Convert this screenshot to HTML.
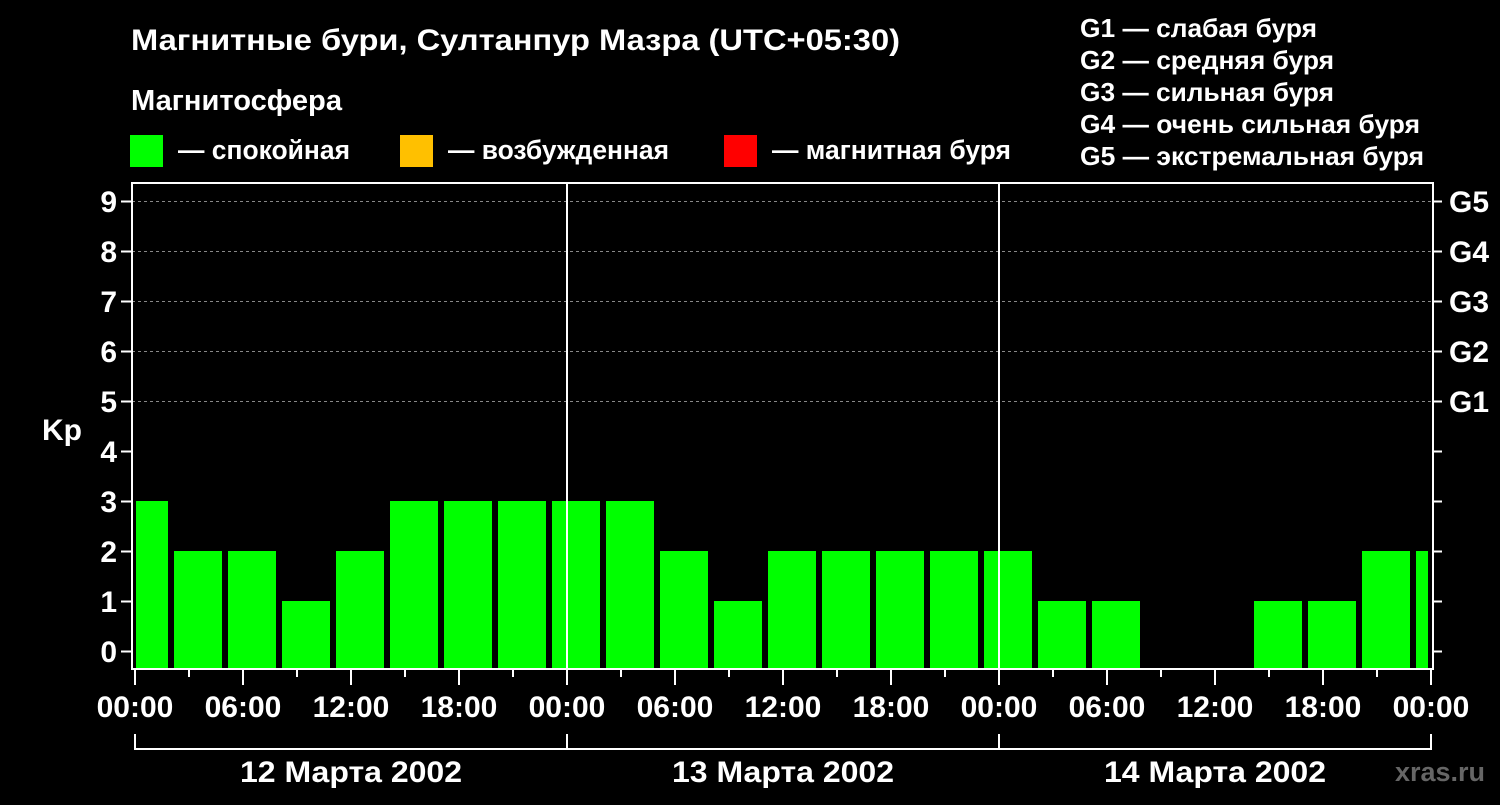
<!DOCTYPE html>
<html><head><meta charset="utf-8"><style>
body{margin:0;background:#000;width:1500px;height:800px;overflow:hidden}
svg text{font-family:"Liberation Sans",Arial,sans-serif;font-weight:bold;fill:#fff}
</style></head><body>
<svg width="1500" height="800" xmlns="http://www.w3.org/2000/svg">
<rect width="1500" height="800" fill="#000"/>
<text x="131" y="50" font-size="30" textLength="769" lengthAdjust="spacingAndGlyphs">Магнитные бури, Султанпур Мазра (UTC+05:30)</text>
<text x="131" y="110" font-size="29" textLength="211" lengthAdjust="spacingAndGlyphs">Магнитосфера</text>
<rect x="130" y="135" width="33" height="32" fill="#00ff00"/>
<text x="178" y="159" font-size="27" textLength="172" lengthAdjust="spacingAndGlyphs">— спокойная</text>
<rect x="400" y="135" width="33" height="32" fill="#ffc000"/>
<text x="448" y="159" font-size="27" textLength="221" lengthAdjust="spacingAndGlyphs">— возбужденная</text>
<rect x="724" y="135" width="33" height="32" fill="#ff0000"/>
<text x="772" y="159" font-size="27" textLength="239" lengthAdjust="spacingAndGlyphs">— магнитная буря</text>
<g font-size="26">
<text x="1080" y="37" textLength="237" lengthAdjust="spacingAndGlyphs">G1 — слабая буря</text>
<text x="1080" y="69" textLength="254" lengthAdjust="spacingAndGlyphs">G2 — средняя буря</text>
<text x="1080" y="101" textLength="254" lengthAdjust="spacingAndGlyphs">G3 — сильная буря</text>
<text x="1080" y="133" textLength="340" lengthAdjust="spacingAndGlyphs">G4 — очень сильная буря</text>
<text x="1080" y="165" textLength="344" lengthAdjust="spacingAndGlyphs">G5 — экстремальная буря</text>
</g>
<g stroke="#888" stroke-dasharray="3,3" stroke-width="1">
<line x1="132" x2="1432" y1="201.5" y2="201.5"/>
<line x1="132" x2="1432" y1="251.5" y2="251.5"/>
<line x1="132" x2="1432" y1="301.5" y2="301.5"/>
<line x1="132" x2="1432" y1="351.5" y2="351.5"/>
<line x1="132" x2="1432" y1="401.5" y2="401.5"/>
</g>
<g fill="#00ff00">
<rect x="136" y="501" width="32" height="167"/>
<rect x="174" y="551" width="48" height="117"/>
<rect x="228" y="551" width="48" height="117"/>
<rect x="282" y="601" width="48" height="67"/>
<rect x="336" y="551" width="48" height="117"/>
<rect x="390" y="501" width="48" height="167"/>
<rect x="444" y="501" width="48" height="167"/>
<rect x="498" y="501" width="48" height="167"/>
<rect x="552" y="501" width="48" height="167"/>
<rect x="606" y="501" width="48" height="167"/>
<rect x="660" y="551" width="48" height="117"/>
<rect x="714" y="601" width="48" height="67"/>
<rect x="768" y="551" width="48" height="117"/>
<rect x="822" y="551" width="48" height="117"/>
<rect x="876" y="551" width="48" height="117"/>
<rect x="930" y="551" width="48" height="117"/>
<rect x="984" y="551" width="48" height="117"/>
<rect x="1038" y="601" width="48" height="67"/>
<rect x="1092" y="601" width="48" height="67"/>
<rect x="1254" y="601" width="48" height="67"/>
<rect x="1308" y="601" width="48" height="67"/>
<rect x="1362" y="551" width="48" height="117"/>
<rect x="1416" y="551" width="12" height="117"/>
</g>
<g stroke="#fff" stroke-width="2" fill="none">
<rect x="132" y="183" width="1301" height="486"/>
<line x1="567" x2="567" y1="183" y2="668"/>
<line x1="999" x2="999" y1="183" y2="668"/>
<path d="M121 201.5H132M121 251.5H132M121 301.5H132M121 351.5H132M121 401.5H132M121 451.5H132M121 501.5H132M121 551.5H132M121 601.5H132M121 651.5H132"/>
<path d="M1433 201.5H1442M1433 251.5H1442M1433 301.5H1442M1433 351.5H1442M1433 401.5H1442M1433 451.5H1442M1433 501.5H1442M1433 551.5H1442M1433 601.5H1442M1433 651.5H1442"/>
<path d="M135 669V685M243 669V685M351 669V685M459 669V685M567 669V685M675 669V685M783 669V685M891 669V685M999 669V685M1107 669V685M1215 669V685M1323 669V685M1431 669V685"/>
<path d="M189 669V677M297 669V677M405 669V677M513 669V677M621 669V677M729 669V677M837 669V677M945 669V677M1053 669V677M1161 669V677M1269 669V677M1377 669V677"/>
<path d="M135 734V749H1431V734M567 734V749M999 734V749"/>
</g>
<g font-size="30" text-anchor="end">
<text x="117" y="212">9</text><text x="117" y="262">8</text><text x="117" y="312">7</text>
<text x="117" y="362">6</text><text x="117" y="412">5</text><text x="117" y="462">4</text>
<text x="117" y="512">3</text><text x="117" y="562">2</text><text x="117" y="612">1</text>
<text x="117" y="662">0</text>
</g>
<text x="42" y="440" font-size="30">Kp</text>
<g font-size="30">
<text x="1449" y="212">G5</text><text x="1449" y="262">G4</text><text x="1449" y="312">G3</text>
<text x="1449" y="362">G2</text><text x="1449" y="412">G1</text>
</g>
<g font-size="30" text-anchor="middle">
<text x="135" y="717">00:00</text><text x="243" y="717">06:00</text><text x="351" y="717">12:00</text>
<text x="459" y="717">18:00</text><text x="567" y="717">00:00</text><text x="675" y="717">06:00</text>
<text x="783" y="717">12:00</text><text x="891" y="717">18:00</text><text x="999" y="717">00:00</text>
<text x="1107" y="717">06:00</text><text x="1215" y="717">12:00</text><text x="1323" y="717">18:00</text>
<text x="1431" y="717">00:00</text>
<text x="351" y="782" textLength="222" lengthAdjust="spacingAndGlyphs">12 Марта 2002</text>
<text x="783" y="782" textLength="222" lengthAdjust="spacingAndGlyphs">13 Марта 2002</text>
<text x="1215" y="782" textLength="222" lengthAdjust="spacingAndGlyphs">14 Марта 2002</text>
</g>
<text x="1485" y="781" font-size="27" text-anchor="end" style="fill:#666">xras.ru</text>
</svg>
</body></html>
